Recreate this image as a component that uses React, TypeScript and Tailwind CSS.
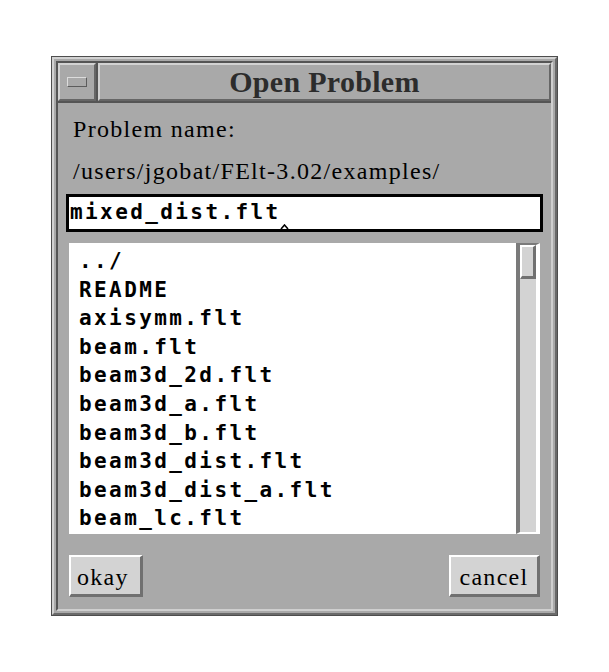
import React from "react";

const files = [
  "../",
  "README",
  "axisymm.flt",
  "beam.flt",
  "beam3d_2d.flt",
  "beam3d_a.flt",
  "beam3d_b.flt",
  "beam3d_dist.flt",
  "beam3d_dist_a.flt",
  "beam_lc.flt",
];

const serif = "font-['Liberation_Serif','Times_New_Roman',serif]";
const mono = "font-['DejaVu_Sans_Mono','Liberation_Mono',monospace]";

export default function App() {
  return (
    <div className="w-[609px] h-[672px] bg-white pt-[56px] pl-[51px]">
      {/* window frame */}
      <div className="relative w-[507px] h-[560px] bg-[#a9a9a9] border border-[#4e4e4e]">
        <div className="h-full border-2 border-t-[#d2d2d2] border-l-[#d2d2d2] border-r-[#6a6a6a] border-b-[#6a6a6a] p-[2px]">
          <div className="h-full flex flex-col border-2 border-t-[#555555] border-l-[#555555] border-r-[#cfcfcf] border-b-[#cfcfcf]">
            {/* title bar */}
            <div className="flex h-[40px] border-b-2 border-[#555555]">
              <div className="w-[38px] flex items-center justify-center border-2 border-t-[#d2d2d2] border-l-[#d2d2d2] border-r-[#666666] border-b-[#666666]">
                <div className="w-[20px] h-[10px] border border-t-[#dcdcdc] border-l-[#dcdcdc] border-r-[#5c5c5c] border-b-[#5c5c5c]" />
              </div>
              <div className="w-[2px] bg-[#555555]" />
              <div className="flex-1 flex items-center justify-center border-2 border-t-[#d2d2d2] border-l-[#d2d2d2] border-r-[#666666] border-b-[#666666]">
                <span className={`${serif} text-[30px] font-bold leading-none tracking-[0.3px] text-[#2c2c2c]`}>
                  Open Problem
                </span>
              </div>
            </div>

            {/* content */}
            <div className="flex flex-col">
              <div className={`${serif} mt-[5px] pl-[15px] text-[24px] leading-[42px] tracking-[1.3px] text-black`}>
                Problem name:
              </div>
              <div className={`${serif} pl-[15px] text-[24px] leading-[42px] tracking-[1.3px] text-black`}>
                /users/jgobat/FElt-3.02/examples/
              </div>

              <div className="relative mt-[2px] ml-[8px] w-[477px] h-[38px] bg-white border-[3px] border-black flex items-center pl-[1px]">
                <span className={`${mono} text-[21px] font-bold tracking-[2.4px] text-black`}>mixed_dist.flt</span>
                <svg className="absolute left-[211px] top-[27px]" width="9" height="6" viewBox="0 0 9 6">
                  <path d="M1 5 L4.5 1 L8 5" fill="none" stroke="black" strokeWidth="1.6" />
                </svg>
              </div>

              {/* file list */}
              <div className="mt-[11px] ml-[11px] w-[471px] h-[291px] flex">
                <div className="flex-1 bg-white pt-[4px] pl-[10px]">
                  {files.map((f) => (
                    <div key={f} className={`${mono} text-[21px] font-bold leading-[28.6px] tracking-[2.4px] text-black`}>
                      {f}
                    </div>
                  ))}
                </div>
                <div className="w-[24px] bg-[#d3d3d3] border-l-4 border-t-2 border-[#7a7a7a] border-r-4 border-r-white border-b-2 border-b-white">
                  <div className="h-[34px] bg-[#d3d3d3] border-l-2 border-t-2 border-white border-r-[3px] border-b-[3px] border-r-[#707070] border-b-[#707070]" />
                </div>
              </div>

              {/* buttons */}
              <div className="mt-[21px] ml-[11px] w-[471px] flex justify-between">
                <button
                  type="button"
                  className={`${serif} w-[74px] h-[42px] bg-[#d3d3d3] text-[24px] tracking-[1.3px] text-black border-2 border-t-white border-l-white border-r-[3px] border-b-[3px] border-r-[#707070] border-b-[#707070] pl-[6px] pt-[3px] text-left leading-none`}
                >
                  okay
                </button>
                <button
                  type="button"
                  className={`${serif} w-[91px] h-[42px] bg-[#d3d3d3] text-[24px] tracking-[1.3px] text-black border-2 border-t-white border-l-white border-r-[3px] border-b-[3px] border-r-[#707070] border-b-[#707070] pt-[3px] leading-none`}
                >
                  cancel
                </button>
              </div>
            </div>
          </div>
        </div>
      </div>
    </div>
  );
}
